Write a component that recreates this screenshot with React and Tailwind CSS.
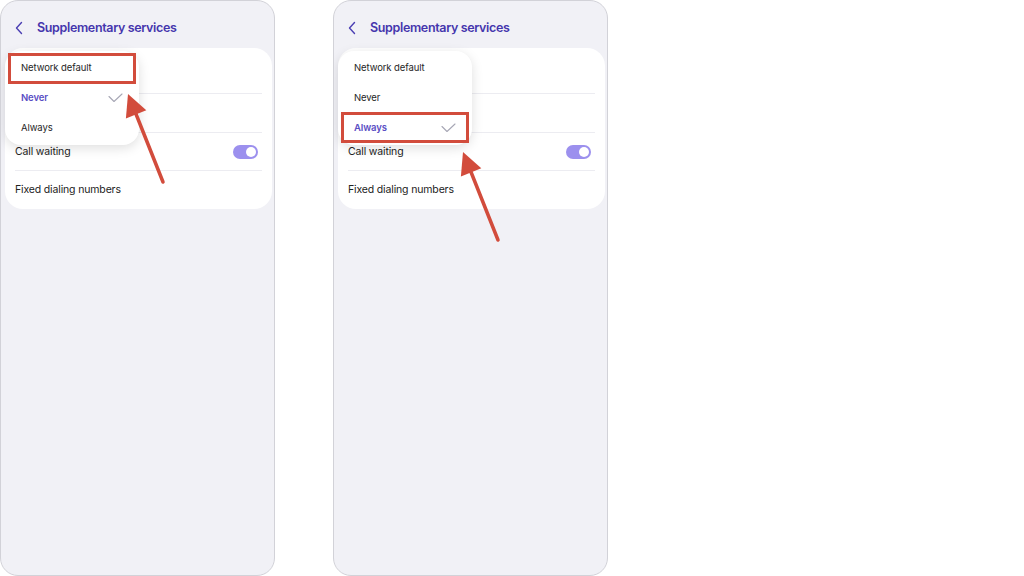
import React from "react";

function Chevron() {
  return (
    <svg width="10" height="14" viewBox="0 0 10 14" fill="none">
      <path d="M7.5 1.5 L2.5 7 L7.5 12.5" stroke="#4b3fb3" strokeWidth="1.4" strokeLinecap="round" strokeLinejoin="round" />
    </svg>
  );
}

function Check() {
  return (
    <svg width="15" height="10" viewBox="0 0 15 10" fill="none">
      <path d="M1 3.5 L6 8.5 L14 1" stroke="#a7a7b5" strokeWidth="1.1" strokeLinecap="round" strokeLinejoin="round" />
    </svg>
  );
}

function Toggle() {
  return (
    <div className="w-[25px] h-[14px] rounded-full bg-[#9c90ee] flex items-center justify-end pr-[2px]">
      <div className="w-[10px] h-[10px] rounded-full bg-white" />
    </div>
  );
}

function Row({ h, children, last }) {
  return (
    <div className={`mx-[10px] flex items-center justify-between ${last ? "" : "border-b border-[#ececf1]"} ${h}`}>
      {children}
    </div>
  );
}

function Menu({ selected, boxTop }) {
  const items = ["Network default", "Never", "Always"];
  return (
    <div className="absolute left-[4px] top-[50px] w-[134px] py-[2px] rounded-[16px] bg-white shadow-[0_3px_12px_rgba(0,0,0,0.13)]">
      {items.map((it) => (
        <div key={it} className="h-[30px] pl-[16px] pr-[16px] flex items-center justify-between">
          <span className={it === selected ? "text-[9.5px] font-semibold text-[#5a4ec4] tracking-[-0.1px]" : "text-[9.5px] text-[#262626] tracking-[-0.1px]"}>
            {it}
          </span>
          {it === selected ? <Check /> : null}
        </div>
      ))}
      <div className={`absolute left-[3px] w-[128px] h-[31px] border-[3px] border-[#d24c3c] ${boxTop}`} />
    </div>
  );
}

function Phone({ selected, boxTop }) {
  return (
    <div className="relative w-[275px] h-[576px] shrink-0 rounded-[18px] border border-[#d2d2d8] bg-[#f1f1f6] overflow-hidden">
      <div className="h-[47px] flex items-start pt-[17px] pl-[13px]">
        <div className="h-[20px] flex items-center">
          <Chevron />
        </div>
        <div className="ml-[13px] h-[20px] flex items-center text-[12.5px] font-semibold text-[#4536ad] tracking-[-0.35px]">
          Supplementary services
        </div>
      </div>
      <div className="ml-[4px] mr-[2px] rounded-[18px] bg-white text-[10.5px] text-[#222] tracking-[-0.15px]">
        <Row h="h-[46px]" />
        <Row h="h-[39px]" />
        <Row h="h-[38px]">
          <span>Call waiting</span>
          <div className="mr-[4px]">
            <Toggle />
          </div>
        </Row>
        <Row h="h-[38px]" last>
          <span>Fixed dialing numbers</span>
        </Row>
      </div>
      <Menu selected={selected} boxTop={boxTop} />
    </div>
  );
}

export default function App() {
  return (
    <div className="relative w-[1024px] h-[576px] bg-white flex gap-[58px]" style={{ fontFamily: "Inter, 'Noto Sans', sans-serif" }}>
      <Phone selected="Never" boxTop="top-[2px]" />
      <Phone selected="Always" boxTop="top-[61px]" />
      {/* callout arrows */}
      <svg className="absolute left-0 top-0 pointer-events-none" width="1024" height="576">
        <line x1="163" y1="182" x2="136" y2="114" stroke="#d24c3c" strokeWidth="3.5" strokeLinecap="round" />
        <polygon points="128,94 146.3,110.3 125.9,118.5" fill="#d24c3c" />
        <line x1="498" y1="240" x2="471" y2="172" stroke="#d24c3c" strokeWidth="3.5" strokeLinecap="round" />
        <polygon points="463,152 481.3,168.3 460.9,176.5" fill="#d24c3c" />
      </svg>
    </div>
  );
}
